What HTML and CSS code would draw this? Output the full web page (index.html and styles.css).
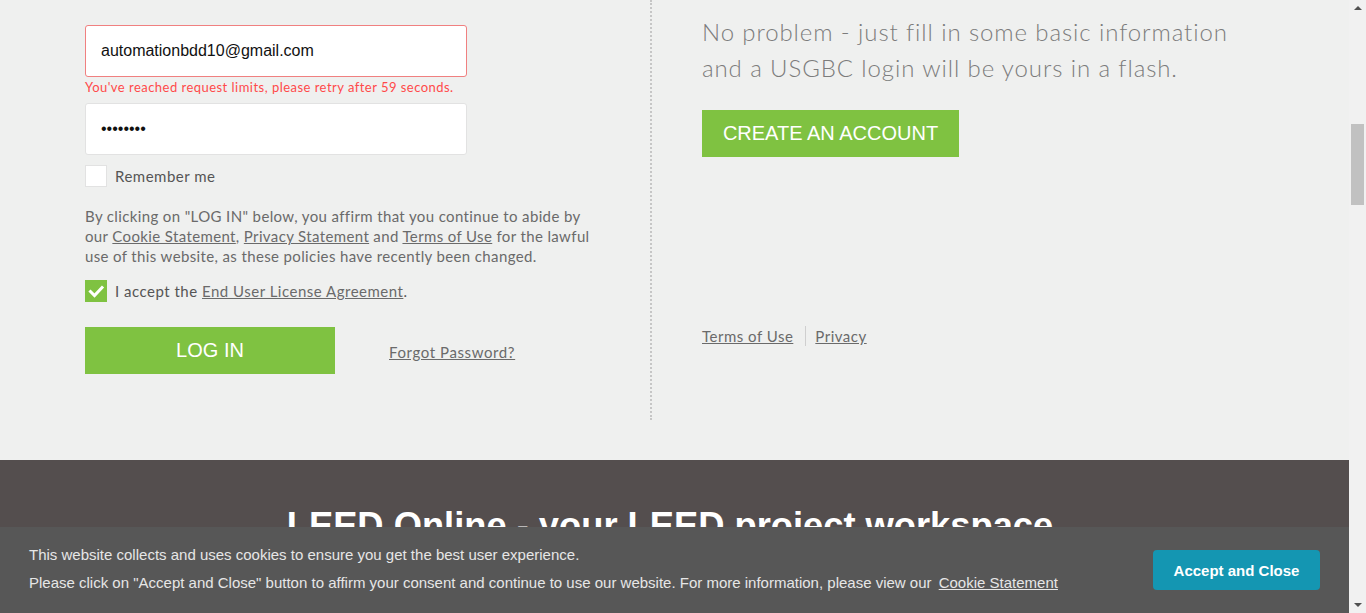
FILE: index.html
```html
<!DOCTYPE html>
<html lang="en">
<head>
<meta charset="utf-8">
<title>USGBC Login</title>
<link rel="stylesheet" href="styles.css">
</head>
<body>
<div class="page">
  <div class="viewport">
    <div class="main">
      <div class="left">
        <input class="field field-error" type="text" value="automationbdd10@gmail.com">
        <div class="error">You've reached request limits, please retry after 59 seconds.</div>
        <input class="field" type="password" value="password">
        <label class="check-row remember">
          <span class="box"></span>
          <span>Remember me</span>
        </label>
        <p class="terms">By clicking on "LOG IN" below, you affirm that you continue to abide by our <a href="#">Cookie Statement</a>, <a href="#">Privacy Statement</a> and <a href="#">Terms of Use</a> for the lawful use of this website, as these policies have recently been changed.</p>
        <label class="check-row accept">
          <span class="box box-checked"><svg width="22" height="22" viewBox="0 0 22 22"><polyline points="5.5,11.5 9.5,15.5 17,7.5" fill="none" stroke="#fff" stroke-width="3" stroke-linecap="square"/></svg></span>
          <span>I accept the <a href="#">End User License Agreement</a>.</span>
        </label>
        <div class="actions">
          <button class="btn btn-login">LOG IN</button>
          <a href="#" class="forgot">Forgot Password?</a>
        </div>
      </div>
      <div class="right">
        <p class="lead">No problem - just fill in some basic information and a USGBC login will be yours in a flash.</p>
        <button class="btn btn-create">CREATE AN ACCOUNT</button>
        <div class="footer-links">
          <a href="#">Terms of Use</a>
          <span class="sep"></span>
          <a href="#">Privacy</a>
        </div>
      </div>
    </div>
    <div class="band">
      <h2 class="band-title">LEED Online - your LEED project workspace</h2>
    </div>
    <div class="cookie">
      <div class="cookie-text">
        <p>This website collects and uses cookies to ensure you get the best user experience.</p>
        <p>Please click on "Accept and Close" button to affirm your consent and continue to use our website. For more information, please view our <a href="#">Cookie Statement</a></p>
      </div>
      <button class="cookie-btn">Accept and Close</button>
    </div>
  </div>
  <div class="scrollbar">
    <span class="arrow arrow-up"></span>
    <div class="track"><span class="thumb"></span></div>
    <span class="arrow arrow-down"></span>
  </div>
</div>
</body>
</html>
```

FILE: styles.css
```css
* { box-sizing: border-box; }
html, body { margin: 0; padding: 0; }
body {
  background: #eff0ef;
  font-family: "Lato", "Open Sans", sans-serif;
  color: #666;
}
.page {
  display: flex;
  height: 613px;
  overflow: hidden;
}
.viewport {
  flex: 1;
  position: relative;
  display: flex;
  flex-direction: column;
  overflow: hidden;
}
.main {
  display: flex;
  height: 460px;
  padding-left: 85px;
  flex-shrink: 0;
}
.left {
  width: 567px;
  height: 420px;
  border-right: 2px dotted #c6c6c6;
  padding-top: 25px;
  display: flex;
  flex-direction: column;
  align-items: flex-start;
}
.field {
  width: 382px;
  height: 52px;
  border: 1px solid #e2e2e2;
  border-radius: 3px;
  background: #fff;
  padding: 0 15px;
  font-family: "Liberation Sans", Arial, sans-serif;
  font-size: 16px;
  color: #111;
  outline: none;
}
.field-error { border-color: #f08080; }
.error {
  font-size: 13px;
  letter-spacing: 0.47px;
  color: #ff4a4a;
  line-height: 20px;
  margin: 0 0 6px;
}
.check-row {
  display: flex;
  align-items: center;
  gap: 8px;
  font-size: 15px;
  letter-spacing: 0.5px;
  color: #555;
}
.remember { margin-top: 10px; }
.box {
  width: 22px;
  height: 22px;
  background: #fff;
  border: 1px solid #e2e2e2;
  display: block;
}
.box-checked {
  background: #7fc241;
  border: none;
}
.box svg { display: block; }
.terms {
  margin: 19px 0 0;
  width: 515px;
  font-size: 15px;
  letter-spacing: 0.37px;
  line-height: 20px;
  color: #6a6a6a;
}
a { color: #6a6a6a; text-decoration: underline; }
.accept { margin-top: 14px; }
.actions {
  display: flex;
  align-items: center;
  margin-top: 25px;
}
.btn {
  border: none;
  background: #7fc241;
  color: #fff;
  font-family: "Liberation Sans", Arial, sans-serif;
  font-size: 20px;
  height: 47px;
  padding: 0;
  cursor: pointer;
}
.btn-login { width: 250px; }
.forgot {
  margin-left: 54px;
  font-size: 15px;
  letter-spacing: 0.6px;
  margin-top: 2px;
}
.right {
  padding-left: 50px;
  padding-top: 14px;
  display: flex;
  flex-direction: column;
  align-items: flex-start;
}
.lead {
  margin: 0;
  width: 540px;
  font-size: 24px;
  font-weight: 300;
  letter-spacing: 0.9px;
  line-height: 36px;
  color: #7c7c7c;
}
.btn-create {
  margin-top: 24px;
  width: 257px;
}
.footer-links {
  margin-top: 170px;
  display: flex;
  align-items: center;
  font-size: 15px;
  letter-spacing: 0.5px;
  position: relative;
  top: -1px;
}
.sep {
  width: 1px;
  height: 20px;
  background: #cfcfcf;
  margin: 0 9px 0 12px;
}
.band {
  flex: 1;
  background: #544e4e;
  padding-top: 45px;
  padding-right: 9px;
}
.band-title {
  margin: 0;
  text-align: center;
  color: #fff;
  font-family: "Liberation Sans", Arial, sans-serif;
  font-size: 36.3px;
  font-weight: bold;
}
.cookie {
  position: absolute;
  left: 0;
  right: 0;
  bottom: 0;
  height: 86px;
  background: #575757;
  display: flex;
  align-items: center;
  padding: 0 29px;
  font-family: "Liberation Sans", Arial, sans-serif;
  font-size: 15px;
  color: #e6e6e6;
}
.cookie-text { flex: 1; margin-top: -2px; }
.cookie-text p { margin: 0; line-height: 28px; }
.cookie-text a { color: #e6e6e6; margin-left: 3px; }
.cookie-btn {
  width: 167px;
  height: 40px;
  border: none;
  border-radius: 4px;
  background: #1496b2;
  color: #fff;
  font-family: "Liberation Sans", Arial, sans-serif;
  font-weight: bold;
  font-size: 15px;
}
.scrollbar {
  width: 17px;
  background: #f1f1f1;
  display: flex;
  flex-direction: column;
  align-items: center;
}
.arrow {
  width: 0;
  height: 0;
  border-left: 4px solid transparent;
  border-right: 4px solid transparent;
  margin: 6px 0;
}
.arrow-up { border-bottom: 4px solid #505050; }
.arrow-down { border-top: 4px solid #505050; }
.track {
  flex: 1;
  width: 100%;
  padding-top: 108px;
  display: flex;
  justify-content: center;
}
.thumb {
  width: 13px;
  height: 81px;
  background: #c1c1c1;
}
```
